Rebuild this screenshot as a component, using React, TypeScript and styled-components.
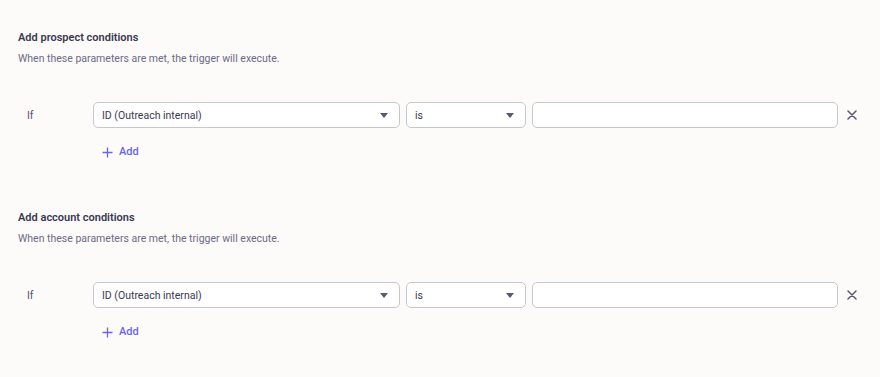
import React from "react";
import styled, { createGlobalStyle } from "styled-components";

const Global = createGlobalStyle`
  html, body { margin: 0; padding: 0; background: #fcfbfa; }
  body { font-family: Roboto, "Noto Sans", sans-serif; -webkit-font-smoothing: antialiased; }
`;

const Page = styled.div`
  display: flex;
  flex-direction: column;
  gap: 52px;
  padding: 31px 18px 0 18px;
`;

const Section = styled.section`
  display: flex;
  flex-direction: column;
`;

const Title = styled.h3`
  margin: 0;
  font-size: 11px;
  line-height: 14px;
  font-weight: 600;
  color: #3a384f;
`;

const Subtitle = styled.p`
  margin: 7px 0 0 0;
  font-size: 10.5px;
  line-height: 14px;
  color: #6d6a84;
`;

const Rows = styled.div`
  display: flex;
  flex-direction: column;
  margin-top: 36px;
`;

const Row = styled.div`
  display: flex;
  align-items: center;
  height: 26px;
`;

const Label = styled.span`
  width: 75px;
  flex: none;
  box-sizing: border-box;
  padding-left: 9px;
  font-size: 10.5px;
  color: #55526b;
`;

const Select = styled.div<{ $w: number }>`
  box-sizing: border-box;
  width: ${(p) => p.$w}px;
  flex: none;
  height: 26px;
  margin-right: 6px;
  border: 1px solid #c9c7cd;
  border-radius: 5px;
  background: #ffffff;
  display: flex;
  align-items: center;
  justify-content: space-between;
  padding: 0 11px 0 8px;
  font-size: 10.5px;
  color: #3a384f;
`;

const Caret = styled.span`
  width: 0;
  height: 0;
  border-left: 4.5px solid transparent;
  border-right: 4.5px solid transparent;
  border-top: 5px solid #5a5870;
  margin-top: 1px;
`;

const Input = styled.div`
  box-sizing: border-box;
  flex: 1;
  height: 26px;
  border: 1px solid #c9c7cd;
  border-radius: 5px;
  background: #ffffff;
`;

const Remove = styled.button`
  flex: none;
  width: 20px;
  height: 20px;
  margin-left: 4px;
  padding: 0;
  border: none;
  background: none;
  display: flex;
  align-items: center;
  justify-content: center;
  color: #5a5870;
`;

const AddButton = styled.button`
  align-self: flex-start;
  margin: 17px 0 0 84px;
  padding: 0;
  border: none;
  background: none;
  display: flex;
  align-items: center;
  gap: 6px;
  font-family: inherit;
  font-size: 11px;
  font-weight: 500;
  line-height: 14px;
  color: #6a63f2;
`;

function Cross() {
  return (
    <svg width="10" height="10" viewBox="0 0 10 10">
      <path d="M1 1 L9 9 M9 1 L1 9" stroke="currentColor" strokeWidth="1.5" strokeLinecap="round" />
    </svg>
  );
}

function Plus() {
  return (
    <svg width="11" height="11" viewBox="0 0 11 11">
      <path d="M5.5 0.5 V10.5 M0.5 5.5 H10.5" stroke="currentColor" strokeWidth="1.3" />
    </svg>
  );
}

function ConditionSection({ kind }: { kind: string }) {
  return (
    <Section>
      <Title>Add {kind} conditions</Title>
      <Subtitle>When these parameters are met, the trigger will execute.</Subtitle>
      <Rows>
        <Row>
          <Label>If</Label>
          <Select $w={307}>
            <span>ID (Outreach internal)</span>
            <Caret />
          </Select>
          <Select $w={120}>
            <span>is</span>
            <Caret />
          </Select>
          <Input />
          <Remove aria-label="Remove">
            <Cross />
          </Remove>
        </Row>
        <AddButton>
          <Plus />
          Add
        </AddButton>
      </Rows>
    </Section>
  );
}

export default function App() {
  return (
    <>
      <Global />
      <Page>
        <ConditionSection kind="prospect" />
        <ConditionSection kind="account" />
      </Page>
    </>
  );
}
